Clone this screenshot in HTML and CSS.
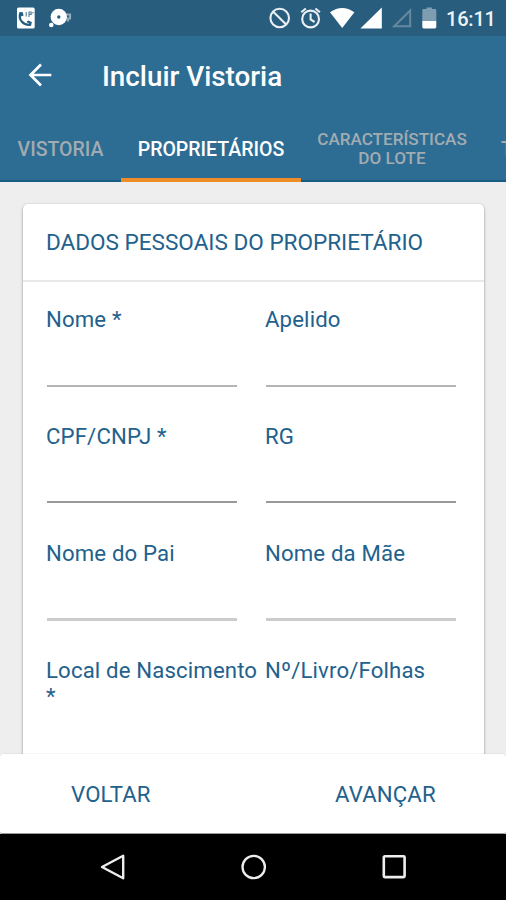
FILE: index.html
```html
<!DOCTYPE html>
<html lang="pt-BR">
<head>
<meta charset="utf-8">
<title>Incluir Vistoria</title>
<link rel="stylesheet" href="styles.css">
</head>
<body>
<div class="screen">
  <div class="status">
    <svg class="status-icons" width="506" height="36" viewBox="0 0 506 36" aria-hidden="true">
      <rect x="17" y="7.500" width="17.700" height="21" rx="1.500" fill="#fff"/>
      <path d="M20.500 12.500q-2 5.500 1.200 9 3.500 4.200 9.300 3.200" fill="none" stroke="#285d7e" stroke-width="2.200"/>
      <path d="M20 12.200l2.600-.3 1 3.600-2.600 1zM26.500 22l1.600-1.500 3.700 1.500-.5 3z" fill="#285d7e"/>
      <path d="M26.200 12v4.500M29 17v-5h2.200v2.400H29M33 12v1.500" fill="none" stroke="#547d98" stroke-width="1.100"/>
      <path d="M65 14.500h5v4h-2v3" fill="none" stroke="#8faabb" stroke-width="2.200"/>
      <circle cx="58.800" cy="17" r="8.200" fill="#fff"/><circle cx="58.800" cy="17" r="1.700" fill="#285d7e"/><circle cx="51.300" cy="25" r="2.300" fill="#fff"/>
      <g fill="none" stroke="#e9eff2" stroke-width="2.100">
        <circle cx="279.700" cy="18" r="9.300"/><path d="M273 11.500l13.400 13.300"/>
        <circle cx="310.600" cy="19" r="8.400"/><path d="M310.600 13.500v6l4 2.500M301.300 12.300l4.500-3.800M319.900 12.300l-4.500-3.800"/>
      </g>
      <path d="M330 12.300q12.200-8.600 24.400 0L342.200 28z" fill="#fff"/>
      <path d="M381.800 7.600v21h-21.400z" fill="#fff"/>
      <path d="M410.200 10.500v15.800h-16z" fill="none" stroke="#66899f" stroke-width="2"/>
      <path d="M423.500 9h3V7.500h5.500V9h3q1.300 0 1.300 1.300V21h-14V10.300Q422.300 9 423.500 9z" fill="#7e9db0"/>
      <path d="M422.300 21h14v6q0 1.400-1.400 1.400h-11.200q-1.400 0-1.400-1.400z" fill="#fff"/>
    </svg>
    <span class="clock">16:11</span>
  </div>
  <header class="appbar">
    <svg width="26" height="24" viewBox="0 0 26 24" aria-hidden="true"><path d="M25.300 12H4.300M15 1.500L4.500 12l10.500 10.500" fill="none" stroke="#fff" stroke-width="2.700"/></svg>
    <h1 class="title">Incluir Vistoria</h1>
  </header>
  <nav class="tabs">
    <a class="tab tab-first">VISTORIA</a>
    <a class="tab tab-active">PROPRIETÁRIOS</a>
    <a class="tab tab-double">CARACTERÍSTICAS<br>DO LOTE</a>
    <a class="tab tab-last">T</a>
  </nav>
  <main class="content">
    <section class="card">
      <h2 class="card-title">DADOS PESSOAIS DO PROPRIETÁRIO</h2>
      <div class="fields">
        <label class="field"><span>Nome *</span><i class="line"></i></label>
        <label class="field"><span>Apelido</span><i class="line"></i></label>
        <label class="field"><span>CPF/CNPJ *</span><i class="line dark"></i></label>
        <label class="field"><span>RG</span><i class="line dark"></i></label>
        <label class="field"><span>Nome do Pai</span><i class="line light"></i></label>
        <label class="field"><span>Nome da Mãe</span><i class="line light"></i></label>
        <label class="field"><span>Local de Nascimento<br>*</span></label>
        <label class="field"><span>Nº/Livro/Folhas</span></label>
      </div>
    </section>
  </main>
  <footer class="actions">
    <a class="action back">VOLTAR</a>
    <a class="action next">AVANÇAR</a>
  </footer>
  <div class="navbar">
    <svg width="26" height="28" viewBox="0 0 26 28" aria-hidden="true"><path d="M23.200 2.700v22.600L2 14z" fill="none" stroke="#eee" stroke-width="2.400" stroke-linejoin="round"/></svg>
    <svg width="26" height="28" viewBox="0 0 26 28" aria-hidden="true"><circle cx="12.700" cy="14" r="11.200" fill="none" stroke="#eee" stroke-width="2.300"/></svg>
    <svg width="26" height="28" viewBox="0 0 26 28" aria-hidden="true"><rect x="1.800" y="3.300" width="20.800" height="20.800" rx="1" fill="none" stroke="#eee" stroke-width="2.600"/></svg>
  </div>
</div>
</body>
</html>
```
FILE: styles.css
```css
* { box-sizing: border-box; }
body { margin: 0; font-family: Roboto, "Liberation Sans", sans-serif; }
.screen { width: 506px; height: 900px; display: flex; flex-direction: column; overflow: hidden; background: #eee; }
.status { height: 36px; flex: none; display: flex; background: #285d7e; }
.status-icons { flex: none; }
.clock { margin-left: -60px; width: 60px; line-height: 38px; font-size: 20px; letter-spacing: -.2px; font-weight: 500; color: #eef3f6; white-space: nowrap; }
.appbar { height: 80px; flex: none; display: flex; align-items: center; padding: 0 0 2px 26px; background: #2d6d94; color: #fff; }
.title { margin: 3px 0 0 50px; font-size: 27.8px; font-weight: 500; line-height: 36px; }
.tabs { height: 66px; flex: none; display: flex; background: linear-gradient(#165b83, #165b83) bottom / 100% 2px no-repeat #2d6d94; overflow: hidden; }
.tab { flex: none; height: 66px; line-height: 67px; font-size: 19.5px; font-weight: 500; color: #a2abb0; text-align: center; white-space: nowrap; }
.tab-first { width: 121px; }
.tab-active { width: 180px; color: #fff; border-bottom: 4px solid #f08c26; }
.tab-double { width: 182px; font-size: 17.1px; line-height: 19px; padding-top: 14px; }
.tab-last { padding-left: 18px; }
.content { flex: 1; min-height: 0; padding: 22px 22px 0 23px; overflow: hidden; }
.card { height: 620px; border-radius: 5px; background: #fff; box-shadow: 0 1px 3px rgba(0,0,0,.4); }
.card-title { margin: 0; height: 78px; padding-left: 23px; line-height: 78px; font-size: 22.55px; font-weight: 400; color: #22618c; border-bottom: 2px solid #e8e8e8; white-space: nowrap; }
.fields { display: grid; grid-template-columns: 191px 191px; column-gap: 28px; grid-auto-rows: 117px; padding: 24px 0 0 23px; }
.field { display: flex; flex-direction: column; justify-content: space-between; height: 81px; font-size: 22.2px; letter-spacing: .14px; line-height: 26px; color: #22618c; white-space: nowrap; }
.line { height: 2px; margin-left: 1px; background: #b5b5b5; }
.line.dark { margin-bottom: 1px; background: #999; }
.line.light { height: 3px; background: #ccc; }
.actions { position: relative; height: 80px; flex: none; display: flex; background: #fff; border-bottom: 1px solid #999; border-radius: 4px 4px 2px 2px; box-shadow: 0 -1px 1px rgba(0,0,0,.04); }
.action { width: 50%; line-height: 80px; font-size: 22.2px; letter-spacing: .15px; color: #22618c; }
.back { padding-left: 71px; }
.next { padding-left: 82px; }
.navbar { height: 66px; flex: none; display: flex; justify-content: center; align-items: center; gap: 115px; padding-left: 1px; background: #000; }
```
